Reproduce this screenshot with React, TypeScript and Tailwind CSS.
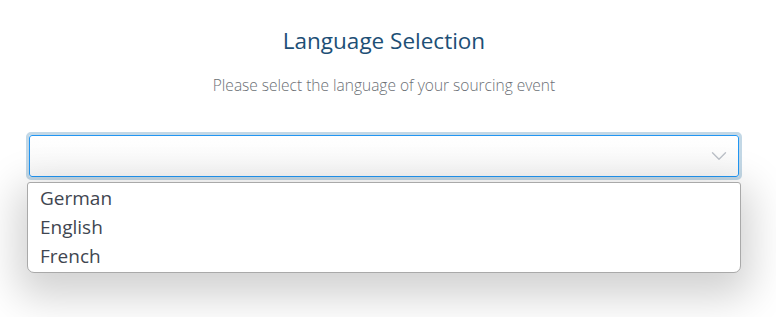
import { ChevronDown } from "lucide-react";

const languages = ["German", "English", "French"];

export default function App() {
  return (
    <div className="w-[776px] h-[317px] bg-white overflow-hidden font-['Open_Sans',sans-serif]">
      <div className="flex flex-col items-center pt-[25px] pr-[8px]">
        <h2 className="text-[22.5px] leading-[32px] text-[#1d4f76]">Language Selection</h2>
        <p className="mt-[17px] text-[15.5px] leading-[22px] font-light text-[#6b6f75]">
          Please select the language of your sourcing event
        </p>
      </div>
      <div className="relative ml-[26px] w-[716px] mt-[36px]">
        <div className="h-[48px] rounded-[5px] border-[3px] border-[#c3d8e6]">
          <div className="h-full rounded-[3px] border border-[#2196f3] bg-gradient-to-b from-white to-[#f8f8f8] flex items-center justify-end pr-[6px]">
            <ChevronDown className="w-[26px] h-[26px] text-[#bcc1c8]" strokeWidth={1.3} />
          </div>
        </div>
        <ul className="absolute left-[1px] right-[1px] top-[50px] z-10 bg-white border border-[#a9a9a9] rounded-b-[7px] rounded-t-[3px] py-[1px] shadow-[0_14px_40px_10px_rgba(0,0,0,0.18)]">
          {languages.map((l) => (
            <li key={l} className="pl-[12px] text-[19px] leading-[29px] text-[#3f4650]">
              {l}
            </li>
          ))}
        </ul>
      </div>
    </div>
  );
}
